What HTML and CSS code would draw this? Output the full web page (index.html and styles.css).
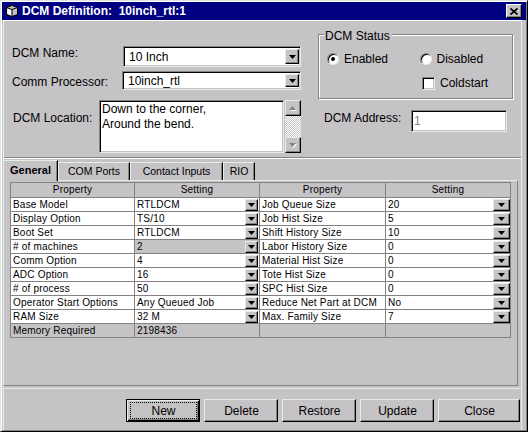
FILE: index.html
```html
<!DOCTYPE html>
<html>
<head>
<meta charset="utf-8">
<link rel="stylesheet" href="styles.css">
</head>
<body>
<div class="window">
  <div class="titlebar">
    <svg class="app-icon" width="14" height="14" viewBox="0 0 14 14">
      <path d="M1.5 3.5 L7 1.5 L12.5 3.5 L12.5 10.5 L7 12.5 L1.5 10.5 Z" fill="#c6c3c6" stroke="#000"/>
      <path d="M2.5 4.5 L6.5 6 L6.5 11.5 L2.5 10 Z" fill="#fff"/>
      <path d="M1.5 3.5 L7 5.5 L12.5 3.5 M7 5.5 V12.5" stroke="#000" fill="none"/>
    </svg>
    <span class="title">DCM Definition:  10inch_rtl:1</span>
    <span class="close-btn">
      <svg width="8" height="7" viewBox="0 0 8 7"><path d="M0.5 0.5 L7.5 6.5 M7.5 0.5 L0.5 6.5" stroke="#000" stroke-width="1.7"/></svg>
    </span>
  </div>
  <div class="body">
    <div class="top">
      <div class="left-col">
        <div class="row row-name">
          <span class="lbl lbl-name">DCM Name:</span>
          <div class="sunken combo"><span class="combo-text">10 Inch</span><span class="raised combo-btn"><svg width="7" height="4" viewBox="0 0 7 4"><polygon points="0,0 7,0 3.5,4" fill="#000"/></svg></span></div>
        </div>
        <div class="row row-comm">
          <span class="lbl lbl-comm">Comm Processor:</span>
          <div class="sunken combo"><span class="combo-text">10inch_rtl</span><span class="raised combo-btn"><svg width="7" height="4" viewBox="0 0 7 4"><polygon points="0,0 7,0 3.5,4" fill="#000"/></svg></span></div>
        </div>
        <div class="row row-loc">
          <span class="lbl lbl-loc">DCM Location:</span>
          <div class="sunken textarea">Down to the corner,<br>Around the bend.</div>
          <div class="vscroll">
            <span class="raised sb-btn"><svg width="8" height="5" viewBox="0 0 8 5"><polygon points="1,5 8,5 4.5,1" fill="#fff"/><polygon points="0,4 7,4 3.5,0" fill="#848284"/></svg></span>
            <span class="sb-track"></span>
            <span class="raised sb-btn"><svg width="8" height="5" viewBox="0 0 8 5"><polygon points="1,1 8,1 4.5,5" fill="#fff"/><polygon points="0,0 7,0 3.5,4" fill="#848284"/></svg></span>
          </div>
        </div>
      </div>
      <div class="right-col">
        <div class="group">
          <span class="group-title">DCM Status</span>
          <div class="opt-row">
            <label class="opt"><span class="radio checked"></span><span>Enabled</span></label>
            <label class="opt"><span class="radio"></span><span>Disabled</span></label>
          </div>
          <div class="opt-row chk-row">
            <label class="opt"><span class="checkbox"></span><span>Coldstart</span></label>
          </div>
        </div>
        <div class="addr-row">
          <span class="lbl lbl-addr">DCM Address:</span>
          <div class="sunken addr-input">1</div>
        </div>
      </div>
    </div>
    <div class="tabs-area">
      <div class="tabstrip">
        <span class="tab active t-general">General</span>
        <span class="tab t-com">COM Ports</span>
        <span class="tab t-contact">Contact Inputs</span>
        <span class="tab t-rio">RIO</span>
      </div>
      <div class="tabpanel">
        <div class="grid">
          <div class="c h">Property</div><div class="c h">Setting</div><div class="c h">Property</div><div class="c h">Setting</div>

          <div class="c">Base Model</div>
          <div class="c set"><span class="v">RTLDCM</span><span class="raised dd"><svg width="7" height="4" viewBox="0 0 7 4"><polygon points="0,0 7,0 3.5,4"/></svg></span></div>
          <div class="c">Job Queue Size</div>
          <div class="c set r"><span class="v">20</span><span class="raised dd"><svg width="7" height="4" viewBox="0 0 7 4"><polygon points="0,0 7,0 3.5,4"/></svg></span></div>

          <div class="c">Display Option</div>
          <div class="c set"><span class="v">TS/10</span><span class="raised dd"><svg width="7" height="4" viewBox="0 0 7 4"><polygon points="0,0 7,0 3.5,4"/></svg></span></div>
          <div class="c">Job Hist Size</div>
          <div class="c set r"><span class="v">5</span><span class="raised dd"><svg width="7" height="4" viewBox="0 0 7 4"><polygon points="0,0 7,0 3.5,4"/></svg></span></div>

          <div class="c">Boot Set</div>
          <div class="c set"><span class="v">RTLDCM</span><span class="raised dd"><svg width="7" height="4" viewBox="0 0 7 4"><polygon points="0,0 7,0 3.5,4"/></svg></span></div>
          <div class="c">Shift History Size</div>
          <div class="c set r"><span class="v">10</span><span class="raised dd"><svg width="7" height="4" viewBox="0 0 7 4"><polygon points="0,0 7,0 3.5,4"/></svg></span></div>

          <div class="c"># of machines</div>
          <div class="c set sel"><span class="v">2</span><span class="raised dd"><svg width="7" height="4" viewBox="0 0 7 4"><polygon points="0,0 7,0 3.5,4"/></svg></span></div>
          <div class="c">Labor History Size</div>
          <div class="c set r"><span class="v">0</span><span class="raised dd"><svg width="7" height="4" viewBox="0 0 7 4"><polygon points="0,0 7,0 3.5,4"/></svg></span></div>

          <div class="c">Comm Option</div>
          <div class="c set"><span class="v">4</span><span class="raised dd"><svg width="7" height="4" viewBox="0 0 7 4"><polygon points="0,0 7,0 3.5,4"/></svg></span></div>
          <div class="c">Material Hist Size</div>
          <div class="c set r"><span class="v">0</span><span class="raised dd"><svg width="7" height="4" viewBox="0 0 7 4"><polygon points="0,0 7,0 3.5,4"/></svg></span></div>

          <div class="c">ADC Option</div>
          <div class="c set"><span class="v">16</span><span class="raised dd"><svg width="7" height="4" viewBox="0 0 7 4"><polygon points="0,0 7,0 3.5,4"/></svg></span></div>
          <div class="c">Tote Hist Size</div>
          <div class="c set r"><span class="v">0</span><span class="raised dd"><svg width="7" height="4" viewBox="0 0 7 4"><polygon points="0,0 7,0 3.5,4"/></svg></span></div>

          <div class="c"># of process</div>
          <div class="c set"><span class="v">50</span><span class="raised dd"><svg width="7" height="4" viewBox="0 0 7 4"><polygon points="0,0 7,0 3.5,4"/></svg></span></div>
          <div class="c">SPC Hist Size</div>
          <div class="c set r"><span class="v">0</span><span class="raised dd"><svg width="7" height="4" viewBox="0 0 7 4"><polygon points="0,0 7,0 3.5,4"/></svg></span></div>

          <div class="c">Operator Start Options</div>
          <div class="c set"><span class="v">Any Queued Job</span><span class="raised dd"><svg width="7" height="4" viewBox="0 0 7 4"><polygon points="0,0 7,0 3.5,4"/></svg></span></div>
          <div class="c">Reduce Net Part at DCM</div>
          <div class="c set r"><span class="v">No</span><span class="raised dd"><svg width="7" height="4" viewBox="0 0 7 4"><polygon points="0,0 7,0 3.5,4"/></svg></span></div>

          <div class="c">RAM Size</div>
          <div class="c set"><span class="v">32 M</span><span class="raised dd"><svg width="7" height="4" viewBox="0 0 7 4"><polygon points="0,0 7,0 3.5,4"/></svg></span></div>
          <div class="c">Max. Family Size</div>
          <div class="c set r"><span class="v">7</span><span class="raised dd"><svg width="7" height="4" viewBox="0 0 7 4"><polygon points="0,0 7,0 3.5,4"/></svg></span></div>

          <div class="c ro">Memory Required</div>
          <div class="c ro">2198436</div>
          <div class="c ro"></div>
          <div class="c ro"></div>
        </div>
      </div>
    </div>
    <div class="buttonbar">
      <button class="btn default"><span class="focus">New</span></button>
      <button class="btn"><span class="focus none">Delete</span></button>
      <button class="btn"><span class="focus none">Restore</span></button>
      <button class="btn"><span class="focus none">Update</span></button>
      <button class="btn wide"><span class="focus none">Close</span></button>
    </div>
  </div>
</div>
</body>
</html>
```

FILE: styles.css
```css
* { box-sizing: border-box; }
html, body { margin: 0; padding: 0; }
body {
  width: 528px;
  height: 432px;
  overflow: hidden;
  background: #c6c3c6;
  font-family: "Liberation Sans", Arial, sans-serif;
  font-size: 12px;
  color: #000;
}

.window {
  width: 528px;
  height: 432px;
  border: 1px solid;
  border-color: #dfe6df #000 #000 #dfe6df;
  padding: 1px;
  background: #c6c3c6;
  box-shadow: inset 1px 1px #fff, inset -1px -1px #848284;
  display: flex;
  flex-direction: column;
}

/* title bar */
.titlebar {
  height: 18px;
  flex-shrink: 0;
  background: #000080;
  display: flex;
  align-items: center;
}
.app-icon { margin-left: 3px; flex-shrink: 0; }
.title {
  margin-left: 3px;
  color: #fff;
  font-weight: bold;
  font-size: 12px;
  white-space: pre;
  line-height: 14px;
}
.close-btn {
  margin-left: auto;
  margin-right: 4px;
  width: 16px;
  height: 14px;
  background: #c6c3c6;
  border: 1px solid;
  border-color: #fff #000 #000 #fff;
  box-shadow: inset -1px -1px #848284;
  display: flex;
  align-items: center;
  justify-content: center;
}

/* 3D helpers */
.sunken {
  background: #fff;
  border: 1px solid;
  border-color: #848284 #e4efe4 #e4efe4 #848284;
  box-shadow: inset 1px 1px #000, inset -1px -1px #c6c3c6;
}
.raised {
  background: #c6c3c6;
  border: 1px solid;
  border-color: #e4efe4 #000 #000 #e4efe4;
  box-shadow: inset -1px -1px #848284;
  display: flex;
  align-items: center;
  justify-content: center;
}

.body {
  flex: 1;
  margin: 0 4px 0 1px;
  border-top: 1px solid #fff;
  border-left: 1px solid #e4efe4;
  border-right: 1px solid #e4efe4;
  display: flex;
  flex-direction: column;
}

/* top section */
.top {
  height: 137px;
  flex-shrink: 0;
  border-bottom: 1px solid #848284;
  display: flex;
  padding-left: 8px;
}
.left-col {
  width: 289px;
  padding-top: 25px;
}
.row { display: flex; }
.lbl { line-height: 14px; white-space: nowrap; }
.row-name { height: 21px; }
.lbl-name { width: 111px; }
.row-comm { height: 19px; margin-top: 4px; }
.lbl-comm { width: 110px; margin-top: 4px; }
.row-loc { height: 53px; margin-top: 10px; }
.lbl-loc { width: 87px; padding-left: 1px; margin-top: 11px; }

.combo {
  flex: 1;
  display: flex;
  align-items: center;
  padding: 2px 0 2px 0;
}
.combo-text { flex: 1; padding-left: 5px; line-height: 14px; }
.combo-btn { width: 14px; align-self: stretch; margin-right: 1px; }

.textarea {
  flex: 1;
  padding: 1px 0 0 2px;
  line-height: 15px;
}
.vscroll {
  width: 16px;
  margin-left: 1px;
  display: flex;
  flex-direction: column;
}
.sb-btn { height: 16px; flex-shrink: 0; }
.sb-track {
  flex: 1;
  background: repeating-conic-gradient(#fff 0 25%, #c6c3c6 0 50%) 0 0 / 2px 2px;
}

.right-col {
  width: 195px;
  margin-left: 17px;
  padding-top: 13px;
}
.group {
  height: 65px;
  border: 1px solid #848284;
  box-shadow: inset 1px 1px #fff, 1px 1px #fff;
}
.group-title {
  display: block;
  width: fit-content;
  margin: -6px 0 0 5px;
  padding: 0 2px 0 1px;
  background: #c6c3c6;
  line-height: 14px;
}
.opt-row {
  display: flex;
  height: 14px;
  margin-top: 9px;
  padding-left: 8px;
}
.chk-row { margin-top: 10px; padding-left: 103px; }
.opt {
  width: 96px;
  display: flex;
  align-items: center;
  gap: 5px;
  line-height: 14px;
}
.radio {
  width: 12px;
  height: 12px;
  flex-shrink: 0;
  border-radius: 50%;
  background: #fff;
  border: 1px solid;
  border-color: #848284 #e4efe4 #e4efe4 #848284;
  box-shadow: inset 1px 1px #000;
  display: flex;
  align-items: center;
  justify-content: center;
}
.radio.checked::after {
  content: "";
  width: 4px;
  height: 4px;
  border-radius: 50%;
  background: #000;
}
.checkbox {
  width: 13px;
  height: 13px;
  flex-shrink: 0;
  background: #fff;
  border: 1px solid;
  border-color: #848284 #e4efe4 #e4efe4 #848284;
  box-shadow: inset 1px 1px #000, inset -1px -1px #c6c3c6;
}

.addr-row {
  display: flex;
  margin-top: 11px;
  height: 22px;
}
.lbl-addr { width: 93px; padding-left: 6px; margin-top: 1px; }
.addr-input {
  width: 96px;
  color: #848284;
  padding-left: 2px;
  display: flex;
  align-items: center;
}

/* tabs */
.tabs-area {
  flex-shrink: 0;
  border-top: 1px solid #fff;
  padding-top: 1px;
  margin-left: -1px;
}
.tabstrip {
  height: 20px;
  display: flex;
  align-items: flex-end;
}
.tab {
  height: 18px;
  font-size: 10.5px;
  line-height: 16px;
  text-align: center;
  border-top: 1px solid #e4efe4;
  border-left: 1px solid #e4efe4;
  border-right: 1px solid #000;
  box-shadow: inset -1px 0 #848284;
  white-space: nowrap;
}
.tab.active {
  height: 21px;
  margin-bottom: -1px;
  position: relative;
  background: #c6c3c6;
  font-weight: bold;
  font-size: 11px;
  line-height: 18px;
}
.t-general { width: 55px; }
.t-com { width: 72px; }
.t-contact { width: 93px; }
.t-rio { width: 32px; }

.tabpanel {
  width: 515px;
  height: 206px;
  margin-bottom: 2px;
  border: 1px solid;
  border-color: #e4efe4 #848284 #848284 #e4efe4;
}

.grid {
  display: grid;
  grid-template-columns: 124px 125px 126px 125px;
  grid-auto-rows: 14px;
  width: fit-content;
  margin: 1px 0 0 6px;
  border-top: 1px solid #848284;
  border-left: 1px solid #848284;
}
.c {
  background: #fff;
  border-right: 1px solid #848284;
  border-bottom: 1px solid #848284;
  font-size: 10px;
  letter-spacing: 0.2px;
  line-height: 13px;
  padding-left: 2px;
  white-space: nowrap;
  overflow: hidden;
}
.c.h {
  height: 15px;
  background: #c6c3c6;
  text-align: center;
  line-height: 14px;
  padding-left: 0;
}
.grid > .c.h { grid-row: 1; }
.grid { grid-template-rows: 15px; }
.c.set {
  display: flex;
  padding-right: 1px;
}
.c.set.r { padding-right: 0; }
.c.set .v { flex: 1; }
.c.sel { background: #c6c3c6; }
.c.ro { background: #c6c3c6; }
.dd {
  width: 13px;
  height: 12px;
  margin-top: 1px;
  flex-shrink: 0;
}
.r .dd { width: 17px; }

/* buttons */
.buttonbar {
  flex: 1;
  border-top: 1px solid #e4efe4;
  padding: 10px 1px 0 0;
  display: flex;
  justify-content: flex-end;
  align-items: flex-start;
  gap: 4px;
}
.btn {
  width: 74px;
  height: 23px;
  padding: 0;
  margin: 0;
  background: #c6c3c6;
  font-family: "Liberation Sans", Arial, sans-serif;
  font-size: 12px;
  color: #000;
  border: 1px solid;
  border-color: #e4efe4 #000 #000 #e4efe4;
  box-shadow: inset -1px -1px #848284;
  display: flex;
  align-items: stretch;
}
.btn.wide { width: 82px; }
.btn.default {
  border-color: #000;
  box-shadow: inset 1px 1px #e4efe4, inset -1px -1px #000, inset -2px -2px #848284;
}
.focus {
  flex: 1;
  margin: 2px 2px 2px 3px;
  border: 1px dotted #000;
  display: flex;
  align-items: center;
  justify-content: center;
  line-height: 14px;
}
.focus.none { border-color: transparent; }
```
